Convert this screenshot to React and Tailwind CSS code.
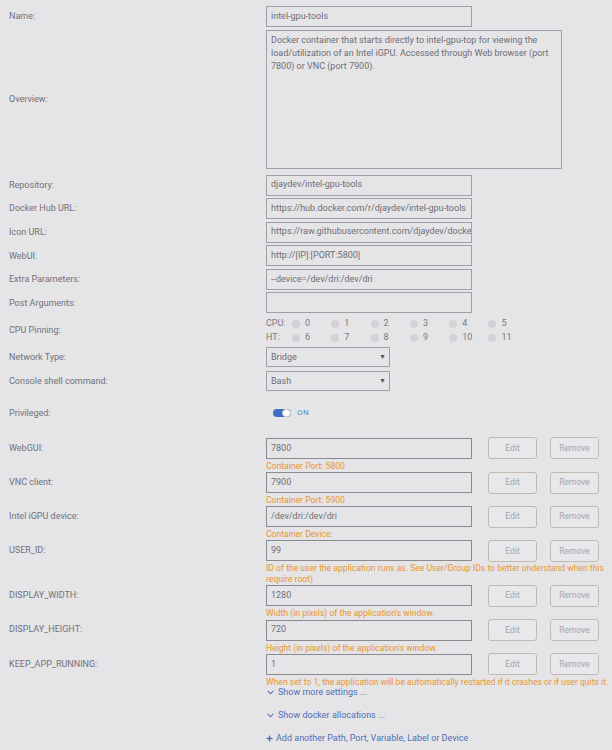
import React from 'react';
import { FaChevronDown, FaPlus } from 'react-icons/fa';

const box = "h-[21px] w-[206px] border border-[#a09fa6] px-[4px] flex items-center whitespace-nowrap overflow-hidden text-[#6f6e76]";
const cfgBox = "h-[21px] w-[206px] border border-[#8b8a91] px-[4px] flex items-center whitespace-nowrap overflow-hidden text-[#6f6e76]";
const btn = "h-[22px] w-[49px] rounded-[3px] border border-[#c2bab2] bg-[#e8e7ea] flex items-center justify-center text-[#a6a5ab] text-[8.5px]";

function Label({ children, h = 21 }) {
    return (
        <div className="w-[266px] shrink-0 pl-[9px] pt-[1px] flex items-center" style={{ height: h }}>
            {children}
        </div>
    );
}

function Field({ label, value, mt }) {
    return (
        <div className="flex" style={{ marginTop: mt }}>
            <Label>{label}</Label>
            <div className={box}>{value}</div>
        </div>
    );
}

function ConfigRow({ label, value, desc, mt }) {
    return (
        <div className="flex items-start" style={{ marginTop: mt }}>
            <Label>{label}</Label>
            <div>
                <div className="flex items-center">
                    <div className={cfgBox}>{value}</div>
                    <button className={`${btn} ml-[16px]`}>Edit</button>
                    <button className={`${btn} ml-[13px]`}>Remove</button>
                </div>
                <div className="text-[#e8962e] text-[8.6px] leading-[10.7px] pt-[1.5px] whitespace-nowrap">
                    {desc.map((line, i) => <div key={i}>{line}</div>)}
                </div>
            </div>
        </div>
    );
}

function Select({ value, mt, label }) {
    return (
        <div className="flex" style={{ marginTop: mt }}>
            <Label h={20}>{label}</Label>
            <div className="h-[20px] w-[124px] border border-[#a09fa6] pl-[4px] pr-[3px] flex items-center justify-between text-[#6f6e76]">
                <span>{value}</span>
                <span className="text-[7px] text-[#55545a]">▼</span>
            </div>
        </div>
    );
}

function CpuLine({ title, nums }) {
    return (
        <div className="flex items-center h-[13.7px]">
            <span className="w-[26px]">{title}</span>
            {nums.map(n => (
                <div key={n} className="w-[39.3px] flex items-center">
                    <span className="w-[8px] h-[8px] rounded-full bg-[#d3d2d6]"></span>
                    <span className="ml-[5px]">{n}</span>
                </div>
            ))}
        </div>
    );
}

export default function App() {
    return (
        <div className="w-[612px] min-h-[750px] overflow-hidden bg-[#e5e4e7] font-['Roboto',sans-serif] text-[9px] text-[#727179] pt-[6px]">
            <Field label="Name:" value="intel-gpu-tools" />

            <div className="flex mt-[3px]">
                <div className="w-[266px] shrink-0 pl-[9px] flex items-center h-[139px]">Overview:</div>
                <div className="h-[139px] w-[296px] border border-[#a09fa6] px-[4px] pt-[3px] leading-[13px] text-[#6f6e76]">
                    Docker container that starts directly to intel-gpu-top for viewing the load/utilization of an Intel iGPU. Accessed through Web browser (port 7800) or VNC (port 7900).
                </div>
            </div>

            <Field label="Repository:" value="djaydev/intel-gpu-tools" mt={5.5} />
            <Field label="Docker Hub URL:" value="https://hub.docker.com/r/djaydev/intel-gpu-tools" mt={2.6} />
            <Field label="Icon URL:" value="https://raw.githubusercontent.com/djaydev/docker-intel-gpu-tools/master/icon.png" mt={2.6} />
            <Field label="WebUI:" value="http://[IP]:[PORT:5800]" mt={2.6} />
            <Field label="Extra Parameters:" value="--device=/dev/dri:/dev/dri" mt={2.6} />
            <Field label="Post Arguments:" value="" mt={2.6} />

            <div className="flex mt-[3px]">
                <Label h={27.4}>CPU Pinning:</Label>
                <div className="text-[#7a7980] pt-[0.5px]">
                    <CpuLine title="CPU:" nums={[0, 1, 2, 3, 4, 5]} />
                    <CpuLine title="HT:" nums={[6, 7, 8, 9, 10, 11]} />
                </div>
            </div>

            <Select label="Network Type:" value="Bridge" mt={3} />
            <Select label="Console shell command:" value="Bash" mt={4} />

            <div className="flex items-center mt-[13px]">
                <Label h={18}>Privileged:</Label>
                <div className="ml-[7px] w-[18px] h-[8px] rounded-[4px] bg-[#3e6dc2] flex justify-end">
                    <span className="w-[9px] h-[8px] rounded-[4px] bg-white border border-[#d0d0d6]"></span>
                </div>
                <span className="ml-[6px] text-[8px] text-[#4a90d6] tracking-[0.5px]">ON</span>
            </div>

            <ConfigRow mt={15} label="WebGUI:" value="7800" desc={["Container Port: 5800"]} />
            <ConfigRow label="VNC client:" value="7900" desc={["Container Port: 5900"]} />
            <ConfigRow label="Intel iGPU device:" value="/dev/dri:/dev/dri" desc={["Container Device:"]} />
            <ConfigRow label="USER_ID:" value="99" desc={["ID of the user the application runs as. See User/Group IDs to better understand when this", "require root)"]} />
            <ConfigRow label="DISPLAY_WIDTH:" value="1280" desc={["Width (in pixels) of the application's window."]} />
            <ConfigRow label="DISPLAY_HEIGHT:" value="720" desc={["Height (in pixels) of the application's window."]} />
            <ConfigRow label="KEEP_APP_RUNNING:" value="1" desc={["When set to 1, the application will be automatically restarted if it crashes or if user quits it."]} />

            <div className="pl-[266px] text-[#4e6fb5]">
                <div className="flex items-center h-[12px] -mt-[0.5px]">
                    <FaChevronDown className="w-[7px] h-[7px] ml-[1px] mr-[4px]" />
                    Show more settings ...
                </div>
                <div className="flex items-center h-[12px] mt-[11px]">
                    <FaChevronDown className="w-[7px] h-[7px] ml-[1px] mr-[4px]" />
                    Show docker allocations ...
                </div>
                <div className="flex items-center h-[12px] mt-[11px]">
                    <FaPlus className="w-[7px] h-[7px] mr-[3px]" />
                    Add another Path, Port, Variable, Label or Device
                </div>
            </div>
        </div>
    );
}
